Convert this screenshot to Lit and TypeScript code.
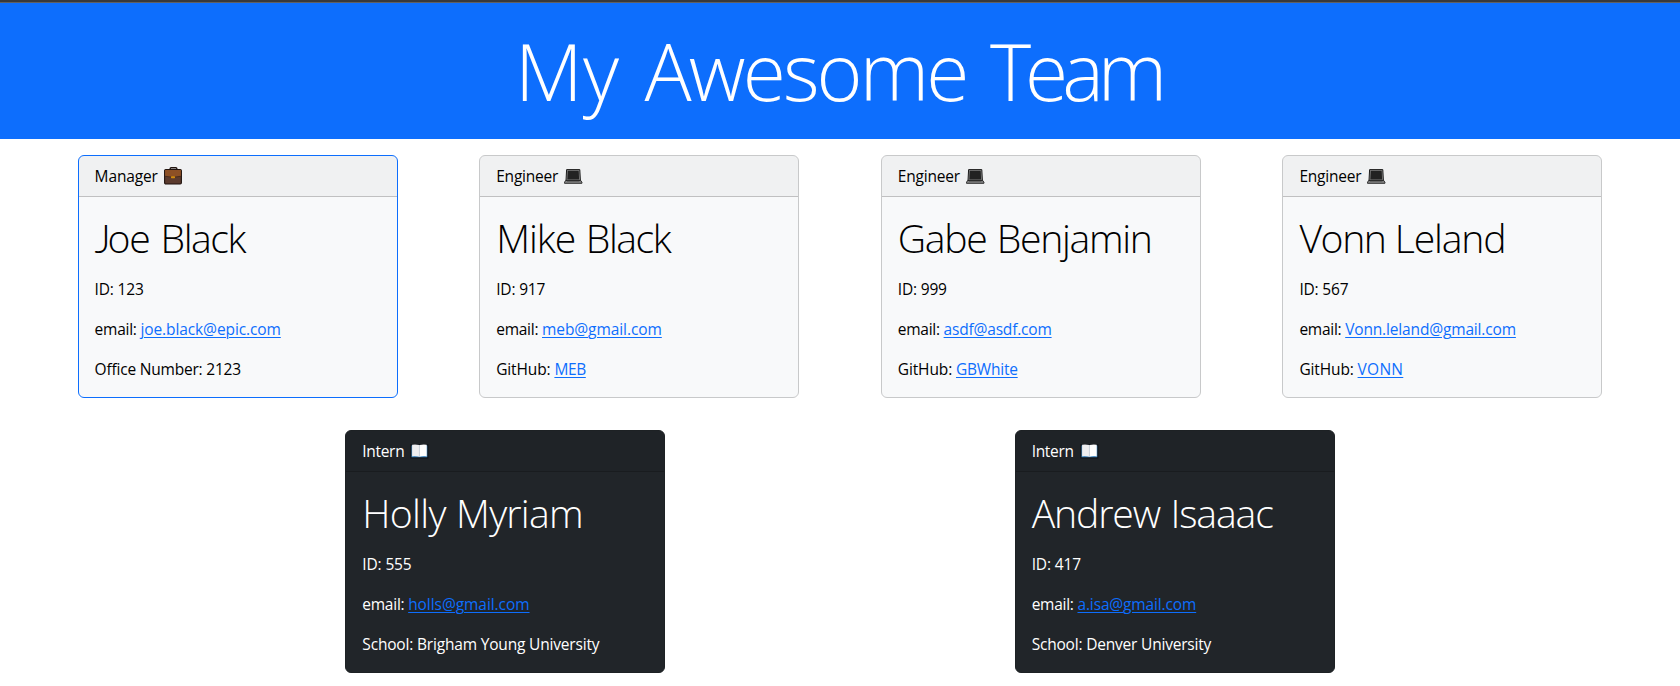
import { LitElement, html, css, svg } from "lit";
import { classMap } from "lit/directives/class-map.js";
import { customElement, property } from "lit/decorators.js";

type Run = [text: string, width: number, font?: string];
interface Line { label: Run; link?: Run; }
interface Member {
  role: Run;
  kind: "manager" | "engineer" | "intern";
  name: Run[];
  lines: Line[];
}

const TEXT = '400 15.5px "Open Sans"';
const NAME = '300 39.2px "Open Sans"';
const TITLE = '300 78.5px "Open Sans"';

const ctx = document.createElement("canvas").getContext("2d")!;

// Tracks a piece of text so that its advance equals the given width.
function run([text, width, family]: Run, font: string) {
  ctx.font = family ? font.replace("Open Sans", family) : font;
  const spacing = (width - ctx.measureText(text).width) / text.length;
  return html`<span class=${family ? "alt" : "run"} style="letter-spacing:${spacing.toFixed(3)}px">${text}</span>`;
}

const icons = {
  manager: svg`
    <path d="M6.2 3V1.6q0-.9.9-.9h4.8q.9 0 .9.9V3" fill="none" stroke="#20130e" stroke-width="1.4"/>
    <rect x=".6" y="2.6" width="16.8" height="14.4" rx="1.2" fill="#5c3b2e" stroke="#20130e" stroke-width="1.1"/>
    <path d="M1.1 3.1h15.8v6.2q-7.9 1.9-15.8 0z" fill="#8d5025"/>
    <path d="M1.1 9.3q7.9 1.9 15.8 0" fill="none" stroke="#3d241a" stroke-width=".8"/>
    <rect x="7" y="9.2" width="4" height="2" rx=".6" fill="#d18b0c"/>`,
  engineer: svg`
    <path d="M2.6 2.6h13.2l.6 11H2z" fill="#8b8b8b" stroke="#1b1b1b" stroke-width="1"/>
    <path d="M3.7 3.8h11l.4 8.6H3.3z" fill="#222"/>
    <path d="M1.7 13.4h15l1.2 1.9v1H.5v-1z" fill="#8a8a8a" stroke="#1b1b1b" stroke-width=".9"/>
    <path d="M2.9 14.4h12.6" stroke="#5a5a5a" stroke-width=".9"/>`,
  intern: svg`
    <path d="M.4 2.2h18v14.2H.4z" fill="#0c1017"/>
    <path d="M1.5 3.4h15.8v11.9H1.5z" fill="#4d8fc4"/>
    <path d="M2.1 2.7q4-.6 7.3.4v11.6q-3.3-1-7.3-.5z" fill="#eeeef0"/>
    <path d="M16.7 2.7q-4-.6-7.3.4v11.6q3.3-1 7.3-.5z" fill="#fff"/>
    <path d="M9.4 3v11.7" stroke="#c9c9cf" stroke-width=".7"/>`,
};

const email: Run = ["email: ", 45.8];
const github: Run = ["GitHub: ", 58.2];
const engineer: Run = ["Engineer", 62];

const rows: Member[][] = [
  [
    {
      role: ["Manager", 63.2], kind: "manager",
      name: [["J", 12.8, "Lato"], ["oe", 42.2], [" ", 11], ["Black", 84.3]],
      lines: [
        { label: ["ID: 123", 49] },
        { label: email, link: ["joe.black@epic.com", 140.4] },
        { label: ["Office Number: 2123", 146.3] },
      ],
    },
    {
      role: engineer, kind: "engineer",
      name: [["Mike", 79], [" ", 10.6], ["Black", 84.3]],
      lines: [
        { label: ["ID: 917", 49] },
        { label: email, link: ["meb@gmail.com", 119.8] },
        { label: github, link: ["MEB", 31.4] },
      ],
    },
    {
      role: engineer, kind: "engineer",
      name: [["Gabe", 88.6], [" ", 10.4], ["Benjamin", 154.7]],
      lines: [
        { label: ["ID: 999", 49] },
        { label: email, link: ["asdf@asdf.com", 108] },
        { label: github, link: ["GBWhite", 61.7] },
      ],
    },
    {
      role: engineer, kind: "engineer",
      name: [["Vonn", 86.2], [" ", 9.2], ["Leland", 110.7]],
      lines: [
        { label: ["ID: 567", 49] },
        { label: email, link: ["Vonn.leland@gmail.com", 170.7] },
        { label: github, link: ["VONN", 45.7] },
      ],
    },
  ],
  [
    {
      role: ["Intern", 42], kind: "intern",
      name: [["Holly", 83.4], [" ", 10.3], ["Myriam", 126.8]],
      lines: [
        { label: ["ID: 555", 49.2] },
        { label: email, link: ["holls@gmail.com", 121.4] },
        { label: ["School: Brigham Young University", 237] },
      ],
    },
    {
      role: ["Intern", 42], kind: "intern",
      name: [["Andrew", 128.3], [" ", 10.6], ["Isaaac", 102]],
      lines: [
        { label: ["ID: 417", 49.2] },
        { label: email, link: ["a.isa@gmail.com", 118.7] },
        { label: ["School: Denver University", 179.5] },
      ],
    },
  ],
];

@customElement("team-card")
class TeamCard extends LitElement {
  @property({ attribute: false }) member!: Member;

  static styles = css`
    :host { display: block; width: 320px; }
    .card {
      box-sizing: border-box;
      height: 243px;
      border: 1px solid #c8c9ca;
      border-radius: 6px;
      background: #f8f9fa;
      color: #000;
      overflow: hidden;
    }
    .manager { border-color: #0d6efd; }
    .intern { background: #212529; border-color: #1d2124; color: #fff; }
    .head {
      display: flex;
      align-items: center;
      height: 24px;
      padding: 8px 16px;
      background: rgba(0, 0, 0, 0.03);
      border-bottom: 1px solid rgba(0, 0, 0, 0.2);
    }
    .intern .head { border-bottom-color: rgba(0, 0, 0, 0.18); }
    .icon { width: 19px; height: 18px; margin: 0 0 1px 6px; flex: none; }
    .body { padding: 16px; }
    p { margin: 0 0 16px; line-height: 24px; white-space: pre; }
    .name { height: 48px; font-size: 39.2px; font-weight: 300; line-height: 49px; }
    .alt { font-family: "Lato", sans-serif; line-height: 1; }
    a { color: #0d6efd; text-decoration: underline; text-underline-offset: 2px; text-decoration-thickness: 1px; }
  `;

  render() {
    const m = this.member;
    return html`<div class=${classMap({ card: true, [m.kind]: true })}>
      <div class="head">${run(m.role, TEXT)}<svg class="icon" viewBox="0 0 19 18">${icons[m.kind]}</svg></div>
      <div class="body"><p class="name">${m.name.map((n) => run(n, NAME))}</p>${m.lines.map(
        (l) => html`<p>${run(l.label, TEXT)}${l.link ? html`<a href="#">${run(l.link, TEXT)}</a>` : null}</p>`
      )}</div>
    </div>`;
  }
}

@customElement("app-root")
class AppRoot extends LitElement {
  static styles = css`
    :host {
      display: block;
      height: 686px;
      overflow: hidden;
      background: #fff;
      font: 400 15.5px/24px "Open Sans", "Noto Sans", sans-serif;
    }
    .strip { height: 2px; background: #38393b; border-bottom: 1px solid #5f6062; }
    .hero {
      box-sizing: border-box;
      height: 136px;
      padding: 19.5px 4px 0 0;
      background: #0d6efd;
      color: #fff;
      text-align: center;
    }
    h1 { margin: 0; font-size: 78.5px; font-weight: 300; line-height: 96px; white-space: pre; }
    .row { display: flex; justify-content: space-evenly; margin: 16px -4px 32px; }
  `;

  render() {
    const title: Run[] = [["My", 104.5], [" ", 25], ["Awesome", 322], [" ", 23.5], ["Team", 171]];
    return html`
      <div class="strip"></div>
      <header class="hero"><h1>${title.map((w) => run(w, TITLE))}</h1></header>
      <main>
        ${rows.map((r) => html`<div class="row">${r.map((m) => html`<team-card .member=${m}></team-card>`)}</div>`)}
      </main>
    `;
  }
}
